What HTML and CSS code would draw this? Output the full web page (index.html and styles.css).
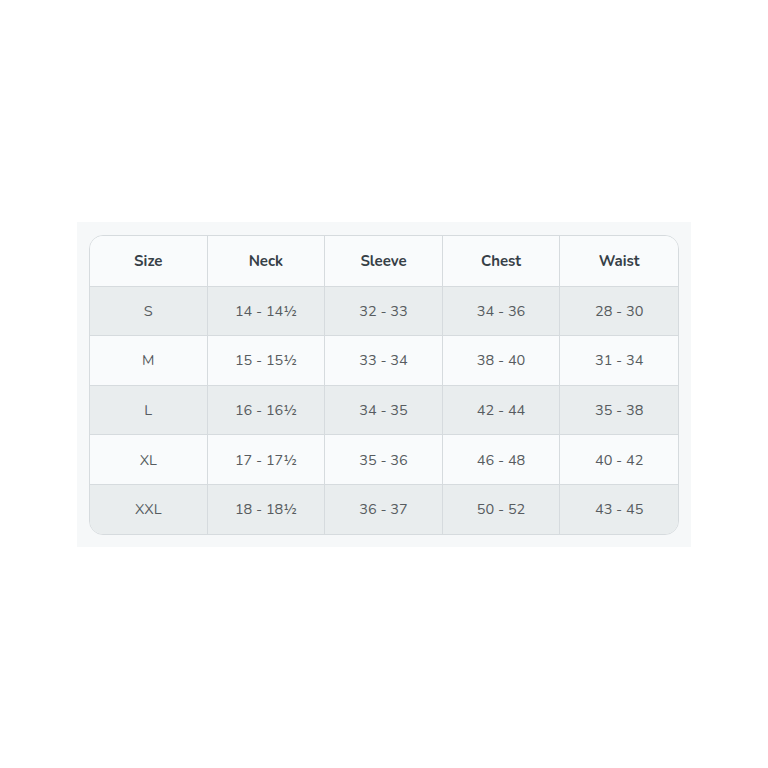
FILE: index.html
```html
<!DOCTYPE html>
<html>
<head>
<meta charset="utf-8">
<link rel="stylesheet" href="styles.css">
</head>
<body>
<div class="panel">
  <table class="chart">
    <thead>
      <tr><th>Size</th><th>Neck</th><th>Sleeve</th><th>Chest</th><th>Waist</th></tr>
    </thead>
    <tbody>
      <tr class="alt"><td>S</td><td>14 - 14½</td><td>32 - 33</td><td>34 - 36</td><td>28 - 30</td></tr>
      <tr><td>M</td><td>15 - 15½</td><td>33 - 34</td><td>38 - 40</td><td>31 - 34</td></tr>
      <tr class="alt"><td>L</td><td>16 - 16½</td><td>34 - 35</td><td>42 - 44</td><td>35 - 38</td></tr>
      <tr><td>XL</td><td>17 - 17½</td><td>35 - 36</td><td>46 - 48</td><td>40 - 42</td></tr>
      <tr class="alt"><td>XXL</td><td>18 - 18½</td><td>36 - 37</td><td>50 - 52</td><td>43 - 45</td></tr>
    </tbody>
  </table>
</div>
</body>
</html>
```
FILE: styles.css
```css
html, body {
  margin: 0;
  padding: 0;
  background: #ffffff;
}
body {
  font-family: "Nunito", "Lato", "Open Sans", sans-serif;
}
.panel {
  margin: 222px 0 0 77px;
  width: 590px;
  padding: 13px 12px 12px 12px;
  background: #f6f8f9;
}
.chart {
  width: 590px;
  border-collapse: separate;
  border-spacing: 0;
  border: 1px solid #d6dbde;
  border-radius: 14px;
  overflow: hidden;
  table-layout: fixed;
}
.chart th, .chart td {
  height: 48.6px;
  padding: 0;
  text-align: center;
  vertical-align: middle;
  border-right: 1px solid #d6dbde;
  border-bottom: 1px solid #d6dbde;
}
.chart tr > *:last-child {
  border-right: none;
}
.chart tbody tr:last-child td {
  border-bottom: none;
}
.chart th {
  padding-top: 1px;
  font-size: 15px;
  font-weight: 700;
  color: #364047;
  background: #f9fbfc;
}
.chart td {
  font-size: 14.5px;
  color: #575c60;
  background: #f9fbfc;
}
.chart tr.alt td {
  background: #e9edee;
}
```
